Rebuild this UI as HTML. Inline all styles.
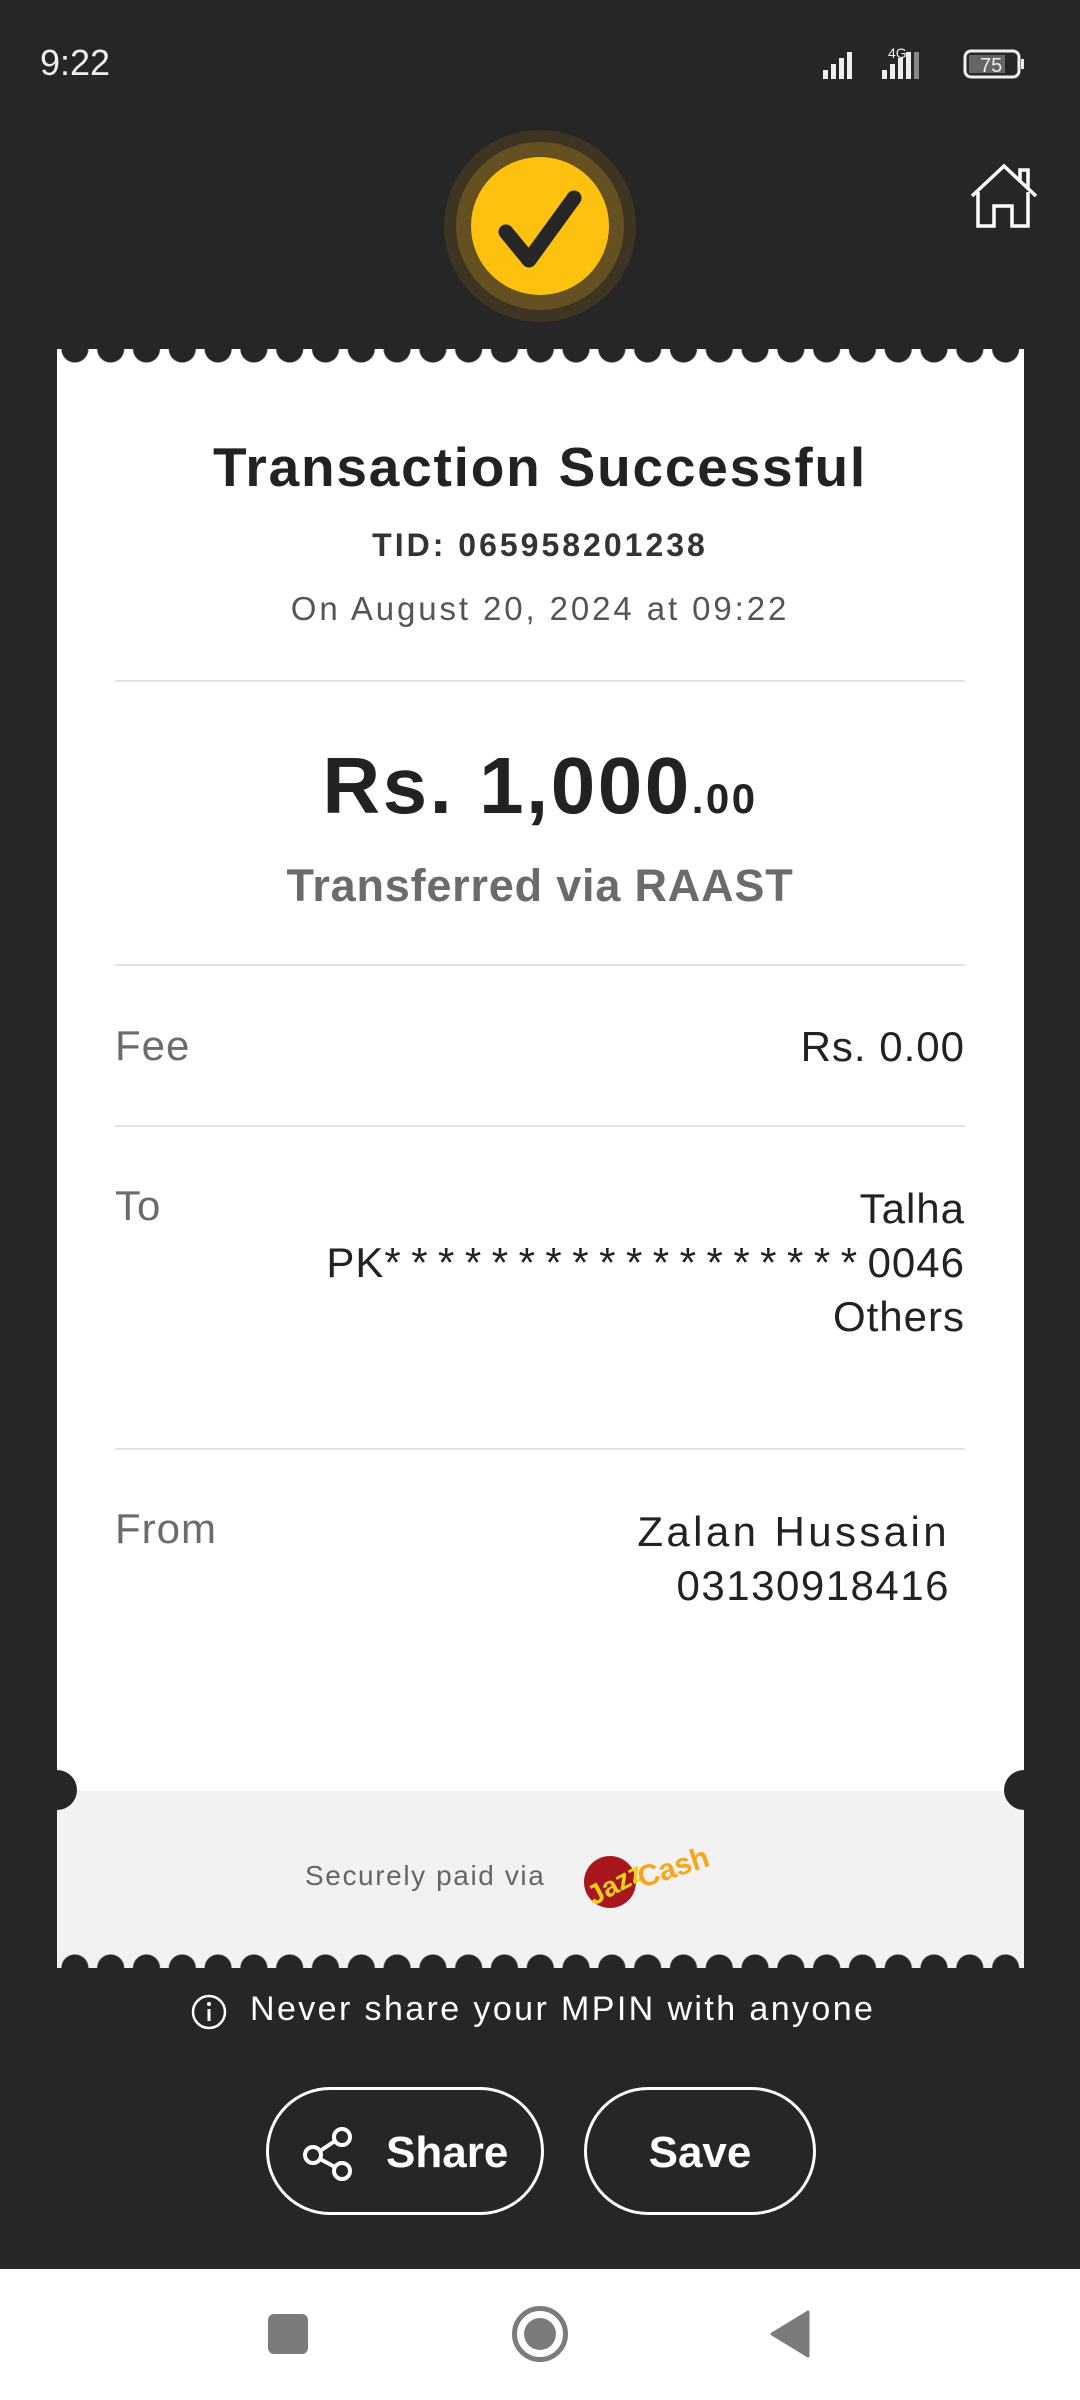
<!DOCTYPE html>
<html><head><meta charset="utf-8"><style>
*{margin:0;padding:0;box-sizing:border-box}
body{width:1080px;height:2400px;background:#262626;position:relative;overflow:hidden;font-family:"Liberation Sans",sans-serif}
.a{position:absolute}
.t{position:absolute;white-space:nowrap}
.card{left:57px;top:349px;width:967px;height:1619px;background:#fff}
.gray{left:57px;top:1791px;width:967px;height:177px;background:#f2f2f2}
.sc{left:57px;width:967px;height:15px}
.div{left:115px;width:850px;height:2px;background:#e2e2e2}
.lbl{left:115px;font-size:42px;color:#6b6b6b;letter-spacing:1px}
.val{right:115px;font-size:42px;color:#222;text-align:right;line-height:54px}
</style></head><body>
<div class="t" style="left:40px;top:42px;font-size:36px;color:#eee">9:22</div>
<svg class="a" style="left:820px;top:44px" width="220" height="40" viewBox="0 0 220 40">
<g fill="#eee"><rect x="3" y="26" width="5" height="9"/><rect x="11" y="20" width="5" height="15"/><rect x="19" y="14" width="5" height="21"/><rect x="27" y="8" width="5" height="27"/>
<rect x="62" y="26" width="5" height="9"/><rect x="70" y="20" width="5" height="15"/><rect x="78" y="14" width="5" height="21"/><rect x="86" y="8" width="5" height="27"/></g>
<rect x="94" y="8" width="5" height="27" fill="#888"/>
<text x="68" y="14" font-size="14" fill="#eee" font-family="Liberation Sans">4G</text>
<rect x="145" y="7" width="54" height="26" rx="6" fill="none" stroke="#eee" stroke-width="3"/>
<rect x="149" y="11" width="36" height="18" fill="#666"/>
<rect x="201" y="15" width="3" height="10" fill="#eee"/>
<text x="160" y="28" font-size="20" fill="#eee" font-family="Liberation Sans">75</text>
</svg>
<svg class="a" style="left:440px;top:128px" width="200" height="196" viewBox="0 0 200 196">
<circle cx="100" cy="98" r="96" fill="#3d3522"/>
<circle cx="100" cy="98" r="84" fill="#655022"/>
<circle cx="100" cy="98" r="69" fill="#fdc10f"/>
<path d="M66 104 L89 132 L134 70" fill="none" stroke="#262626" stroke-width="15" stroke-linecap="round" stroke-linejoin="round"/>
</svg>
<svg class="a" style="left:968px;top:162px" width="72" height="72" viewBox="0 0 72 72">
<g fill="none" stroke="#fff" stroke-width="3.5"><path d="M4 34 L36 4 L68 34"/><path d="M10 30 V64 H26 V44 H44 V64 H60 V30"/><path d="M52 18 V8 H60 V26"/></g>
</svg>
<div class="a card"></div>
<div class="a gray"></div>
<div class="a sc" style="top:349px;background:radial-gradient(circle at 50% 0,#262626 13px,transparent 14px);background-size:35.8px 15px"></div>
<div class="a sc" style="top:1953px;background:radial-gradient(circle at 50% 100%,#262626 13px,transparent 14px);background-size:35.8px 15px"></div>
<div class="a" style="left:37px;top:1770px;width:40px;height:40px;border-radius:50%;background:#262626"></div>
<div class="a" style="left:1004px;top:1770px;width:40px;height:40px;border-radius:50%;background:#262626"></div>

<div class="t" style="left:0;width:1080px;text-align:center;top:435px;font-size:55px;font-weight:bold;color:#222;letter-spacing:1.8px">Transaction Successful</div>
<div class="t" style="left:0;width:1080px;text-align:center;top:527px;font-size:32px;font-weight:bold;color:#333;letter-spacing:3px">TID: 065958201238</div>
<div class="t" style="left:0;width:1080px;text-align:center;top:590px;font-size:33px;color:#555;letter-spacing:2.9px">On August 20, 2024 at 09:22</div>
<div class="a div" style="top:680px"></div>
<div class="t" style="left:0;width:1080px;text-align:center;top:740px;font-size:80px;font-weight:bold;color:#222;letter-spacing:2.5px">Rs. 1,000<span style="font-size:42px">.00</span></div>
<div class="t" style="left:0;width:1080px;text-align:center;top:860px;font-size:45px;font-weight:bold;color:#6b6b6b;letter-spacing:0.8px">Transferred via RAAST</div>
<div class="a div" style="top:964px"></div>
<div class="t lbl" style="top:1022px">Fee</div>
<div class="t val" style="top:1020px;letter-spacing:1px">Rs. 0.00</div>
<div class="a div" style="top:1125px"></div>
<div class="t lbl" style="top:1182px">To</div>
<div class="t val" style="top:1182px;letter-spacing:1px">Talha<br>PK<span style="letter-spacing:10.5px">******************</span>0046<br>Others</div>
<div class="a div" style="top:1448px"></div>
<div class="t lbl" style="top:1505px">From</div>
<div class="t val" style="top:1505px;right:130px">
<span style="letter-spacing:3.4px">Zalan Hussain</span><br><span style="letter-spacing:1.5px">03130918416</span></div>

<div class="t" style="left:305px;top:1860px;font-size:28px;color:#666;letter-spacing:1.6px">Securely paid via</div>
<svg class="a" style="left:575px;top:1840px" width="140" height="70" viewBox="0 0 140 70">
<circle cx="35" cy="42" r="26" fill="#a8171d"/>
<text x="10" y="58" font-size="28" font-weight="bold" fill="#f7d21a" font-family="Liberation Sans" transform="rotate(-28 30 45)">Jazz</text>
<text x="62" y="40" font-size="30" font-weight="bold" fill="#f9a51b" font-family="Liberation Sans" transform="rotate(-18 90 30)">Cash</text>
</svg>

<svg class="a" style="left:190px;top:1993px" width="38" height="38" viewBox="0 0 38 38"><circle cx="19" cy="19" r="16" fill="none" stroke="#fff" stroke-width="2.5"/><rect x="17.5" y="16" width="3" height="12" fill="#fff"/><circle cx="19" cy="11" r="2" fill="#fff"/></svg>
<div class="t" style="left:250px;top:1990px;font-size:34px;color:#fff;letter-spacing:2.4px">Never share your MPIN with anyone</div>

<div class="a" style="left:266px;top:2087px;width:278px;height:128px;border:3px solid #fff;border-radius:64px"></div>
<svg class="a" style="left:302px;top:2125px" width="56" height="56" viewBox="0 0 56 56"><g fill="none" stroke="#fff" stroke-width="4"><circle cx="11" cy="30" r="8"/><circle cx="40" cy="12" r="8"/><circle cx="40" cy="46" r="8"/><path d="M18 26 L33 16 M18 34 L33 42"/></g></svg>
<div class="t" style="left:386px;top:2128px;font-size:44px;font-weight:bold;color:#fff">Share</div>
<div class="a" style="left:584px;top:2087px;width:232px;height:128px;border:3px solid #fff;border-radius:64px"></div>
<div class="t" style="left:584px;width:232px;text-align:center;top:2128px;font-size:44px;font-weight:bold;color:#fff">Save</div>

<div class="a" style="left:0;top:2269px;width:1080px;height:131px;background:#fff"></div>
<div class="a" style="left:268px;top:2314px;width:40px;height:40px;border-radius:6px;background:#7b7b7b"></div>
<div class="a" style="left:512px;top:2306px;width:56px;height:56px;border-radius:50%;border:5px solid #7b7b7b"></div>
<div class="a" style="left:524px;top:2318px;width:32px;height:32px;border-radius:50%;background:#7b7b7b"></div>
<svg class="a" style="left:768px;top:2310px" width="44" height="48" viewBox="0 0 44 48"><path d="M40 2 V46 L4 24 Z" fill="#7b7b7b" stroke="#7b7b7b" stroke-width="3" stroke-linejoin="round"/></svg>
</body></html>
